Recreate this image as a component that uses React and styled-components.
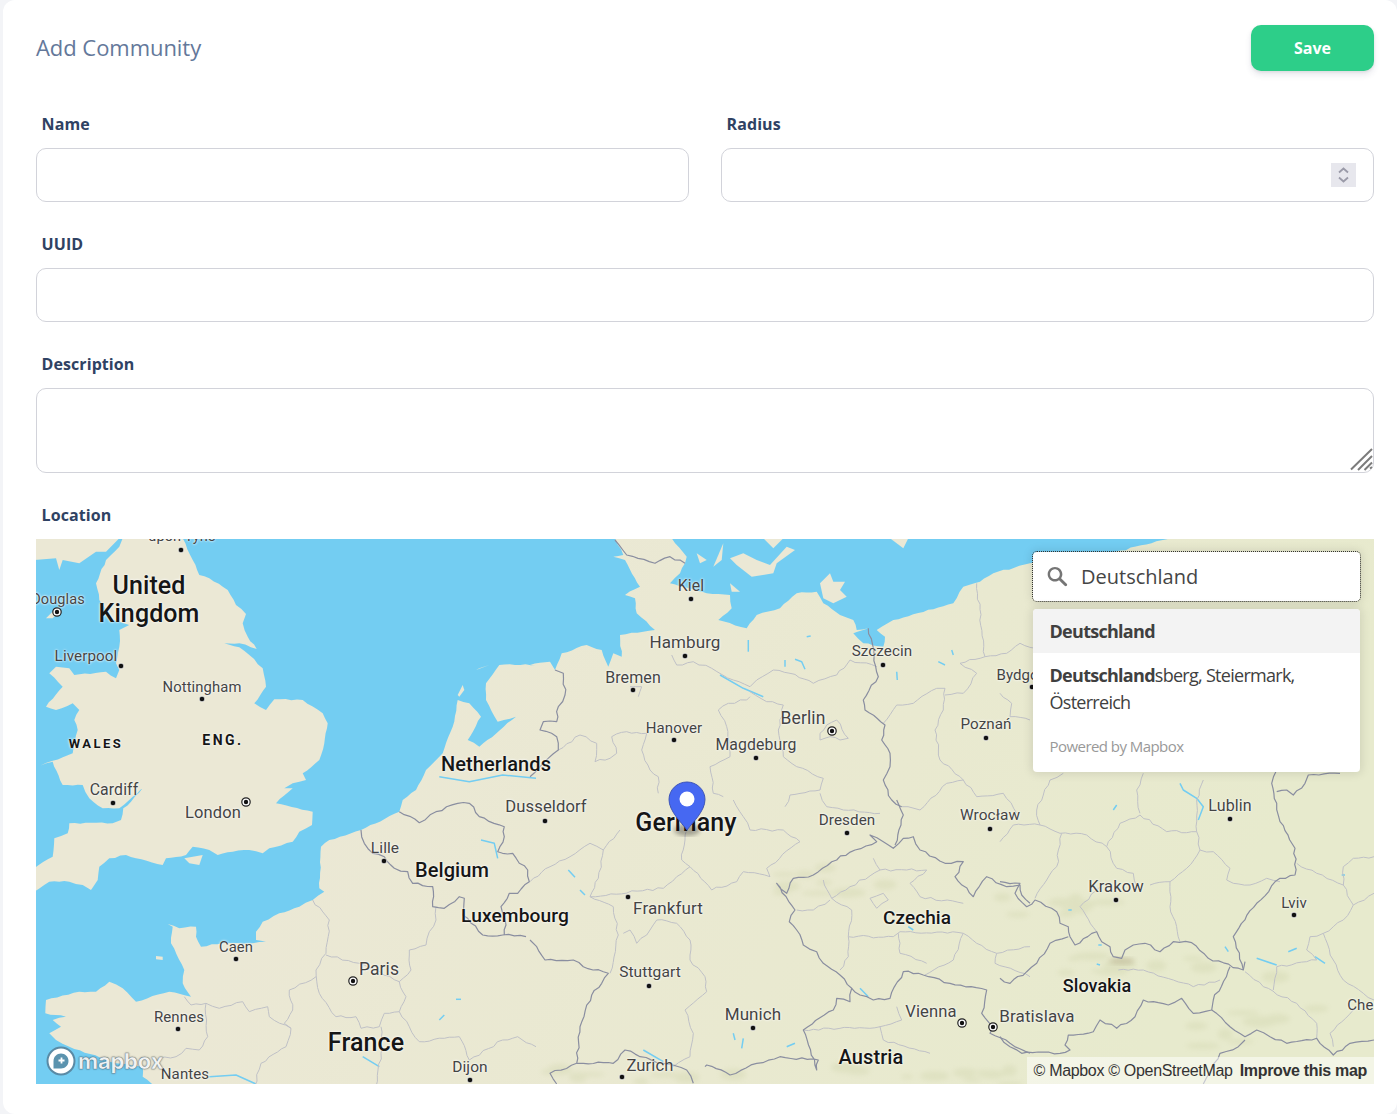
import React from 'react';
import styled, { createGlobalStyle } from 'styled-components';

const GlobalStyle = createGlobalStyle`
  html, body {
    margin: 0;
    padding: 0;
    background: #f3f4f7;
    font-family: 'Open Sans', 'Noto Sans', sans-serif;
  }
  * { box-sizing: border-box; }
`;

// the crops of the reference were 3x, so the shapes are traced in crop coordinates
const MAP_X = 36;
const MAP_Y = 539;
const NORTH_WEST = [36, 540];
const SOUTH_WEST = [36, 800];
const NORTH_MID = [530, 540];
const SOUTH_MID = [530, 800];
const EAST = [1000, 770];

const z = ([ox, oy], points) =>
  points.trim().split(/\s+/).map((p) => {
    const [x, y] = p.split(',').map(Number);
    return `${(x / 3 + ox).toFixed(1)},${(y / 3 + oy).toFixed(1)}`;
  }).join(' ');

// small repeatable noise, so that borders and coasts get their jags back
let seed = 7;
const noise = () => {
  seed = (seed * 9301 + 49297) % 233280;
  return seed / 233280 - 0.5;
};

const wiggle = (points, amount, step = 7) => {
  const list = points.trim().split(/\s+/).map((p) => p.split(',').map(Number));
  const out = [];
  list.forEach(([x, y], i) => {
    out.push(`${x},${y}`);
    const next = list[i + 1];
    if (!next) return;
    const dx = next[0] - x;
    const dy = next[1] - y;
    const length = Math.hypot(dx, dy);
    const parts = Math.floor(length / step);
    for (let k = 1; k < parts; k += 1) {
      const t = k / parts;
      const off = noise() * amount;
      const px = x + dx * t - (dy / length) * off;
      const py = y + dy * t + (dx / length) * off;
      out.push(`${px.toFixed(1)},${py.toFixed(1)}`);
    }
  });
  return out.join(' ');
};

const britain = wiggle([
  z(NORTH_WEST, '260,-5 440,-5 470,60 490,105 520,115 575,150 600,195 630,222 620,250 635,290 662,327 610,310 565,310 610,322 640,345 680,385 690,440 655,490 690,510 715,478 800,480 860,520 875,550 865,610 850,660 800,700 810,720 770,730 745,745 770,745 720,790'),
  z(SOUTH_WEST, '830,35 828,75 790,95 770,125 700,145 680,160 640,150 590,155 545,165 520,150 470,140 450,165 390,175 380,195 300,175 270,165 220,175 190,200 185,240 165,270 140,255 100,245 40,245 -5,275 -5,205 50,170 55,115 95,100 100,70 230,70 255,60 262,25 285,5'),
  z(NORTH_WEST, '335,730 290,770 250,805 200,805 160,775 140,735 80,735 50,665 -5,682 50,662 110,640 125,570 115,540 130,510 110,490 60,510 30,500 80,440 40,400 60,380 100,385 115,405 210,395 240,415 250,390 240,370 250,320 250,270 280,255 230,240 190,180 180,130 210,60 250,20'),
].join(' '), 1.4, 5);

const continent = wiggle([
  z(SOUTH_WEST, '360,860 320,830 320,800 240,790 100,740 60,720 40,700 75,680 50,660 90,650 28,640 30,600 130,575 180,575 220,545 260,565 300,605 400,575 465,590 440,550 445,510 405,430 410,380 395,372 430,385 480,380 480,410 495,440 560,430 650,430 690,425 660,420 660,395 680,365 730,340 790,320 830,300 865,275 850,265 855,140 880,120 975,90 1090,35'),
  z(NORTH_WEST, '1100,780 1140,750 1170,690 1220,640 1250,560 1265,480 1300,490 1335,530 1295,600 1330,620 1440,530 1385,545 1350,480 1350,430 1390,375 1500,375'),
  z(NORTH_MID, '0,375 60,365 75,390 95,340 170,315 215,330 235,380 250,340 275,350 270,285 340,275 375,270 320,220 315,175 285,165 330,140 285,60 250,50 280,45 255,-5 425,-5 470,50 465,70 450,100 420,130 530,160 600,165 605,205 565,240 650,265 680,225 750,205 800,160 860,155 880,190 930,225 970,240 980,270 1015,265 970,280 1000,310 1060,320 1065,290 1040,270 1090,240 1270,190 1300,140 1350,125 1390,100 1500,70 1530,62'),
  '1100,556 1172,538 1375,538 1375,1085 156,1085',
].join(' '), 1.4, 5);

const islands = [
  z(NORTH_WEST, '-5,-5 250,-5 210,35 180,35 130,70 80,60 70,90 60,55 -5,60'),
  z(NORTH_WEST, '30,235 60,205 75,210 50,235'),
  z(NORTH_WEST, '1265,465 1280,435 1285,450 1270,470'),
  z(NORTH_WEST, '1320,390 1360,375 1330,385'),
  z(SOUTH_WEST, '445,175 500,165 490,195 460,190'),
  z(SOUTH_WEST, '360,468 380,470 380,480 360,478'),
  z(NORTH_MID, '600,55 640,40 680,60 720,75 770,20 795,30 740,70 730,100 665,110 620,75'),
  z(NORTH_MID, '700,-5 730,25 760,-5'),
  z(NORTH_MID, '1080,-5 1120,25 1135,-5'),
  z(NORTH_MID, '500,40 530,60 510,70'),
  z(NORTH_MID, '550,80 580,10 575,60'),
  z(NORTH_MID, '600,130 630,155 605,155'),
  z(NORTH_MID, '870,130 900,100 910,125 945,125 930,150 950,170 910,190 880,175'),
];

const countryBorders = [
  z(NORTH_MID, '75,390 100,400 105,465 85,500 80,545 40,545 30,570 80,590 85,630 30,680 0,710'),
  z(SOUTH_WEST, '975,90 985,130 1010,160 1045,170 1075,205 1115,215 1130,250 1190,260 1190,320 1225,325 1270,290 1285,295 1280,345 1340,405 1400,405 1470,410'),
  z(SOUTH_WEST, '1090,35 1150,68 1200,35 1265,10 1300,10 1330,50 1405,80 1405,110 1385,155 1430,160 1450,190 1475,210 1480,245 1445,280 1420,280 1395,320 1410,375 1405,405'),
  z(SOUTH_MID, '0,420 20,440 45,480 130,480 160,500 235,520 215,550 185,585 150,680 140,790 60,820 80,852'),
  z(SOUTH_MID, '140,790 160,790 250,790 285,750 330,770 400,790 470,810 490,850'),
  z(SOUTH_MID, '525,800 530,795 600,825 680,790 750,770 865,780 860,810 820,690 910,630 920,595 960,605 965,565 930,525 880,490 860,455 820,435 800,390 778,365 795,330 740,250 770,280 790,235 850,225 905,185 975,150 1040,125 1020,105 1060,125 1090,145 1120,115 1150,110 1170,150 1245,190 1300,185 1275,230 1330,290 1370,230 1430,260 1470,255 1475,285 1500,310'),
  z(EAST, '0,335 60,340 45,370 80,410 105,390 170,425 180,460 205,470 210,500 225,525 290,485 305,515 330,530 340,560 365,565 375,540 400,525 435,520 480,545 520,515 575,518 625,565 730,600 735,575'),
  z(EAST, '690,590 640,690 635,720 580,730 545,685 505,705 430,690 405,740 350,775 300,750 280,785 205,795 195,825 210,840 180,850 65,850 30,830 0,800'),
  z(EAST, '205,500 150,520 110,580 80,605 30,640 0,625'),
  z(SOUTH_MID, '965,565 990,585 1030,600 1080,595 1120,515 1180,525 1260,550 1370,570 1355,640 1390,680 1380,700 1440,730 1500,760'),
  z(EAST, '730,600 700,500 770,400 840,325 885,315 885,235 840,155 830,100 815,40 830,0'),
  z(EAST, '830,65 860,60 880,75 915,40 925,15 1020,10'),
  z(EAST, '635,720 690,770 735,800 770,780 810,800 860,820 950,805 1000,855 1050,820 1122,810'),
  z(EAST, '735,810 715,830 660,850 610,942'),
  z(NORTH_MID, '1015,265 1045,410 1000,480 1005,510 1065,555 1055,600 1080,640 1080,680 1060,720 1085,780 1115,800'),
  z(SOUTH_MID, '1100,0 1120,45 1095,135'),
  z(NORTH_MID, '255,0 290,45 375,70 420,50 465,70'),
].map((points) => wiggle(points, 2.6, 5));

const stateBorders = [
  z(NORTH_MID, '425,345 440,375 490,365 545,385 610,420 660,440 680,420 730,390 780,400 850,430 920,405 960,360 1040,380'),
  z(NORTH_MID, '660,455 710,485 760,495 745,570 760,650 800,680 880,715 870,750 780,765 765,800'),
  z(NORTH_MID, '660,470 650,480 595,490 565,510 590,560 600,650 540,680 550,760 580,770'),
  z(NORTH_MID, '85,630 150,585 200,610 195,665 240,655 260,640 245,590 290,575 350,580 335,630 360,690 385,710 385,760'),
  z(NORTH_MID, '870,760 890,800 940,810 1050,820'),
  z(NORTH_MID, '870,580 890,555 920,540 955,595 930,600 900,590 870,600 870,580'),
  z(NORTH_MID, '300,440 335,440 325,470'),
  z(NORTH_MID, '1060,550 1100,495 1150,490 1220,445 1245,445 1240,510 1215,570 1230,660 1300,720 1250,730 1170,810 1115,800'),
  z(NORTH_MID, '1245,465 1300,460 1340,400 1290,370 1365,350 1340,130'),
  z(NORTH_MID, '1365,350 1430,340 1470,310 1530,330'),
  z(NORTH_MID, '1410,460 1445,490 1440,530 1500,540'),
  z(NORTH_MID, '1300,720 1340,770 1420,760 1460,820'),
  z(SOUTH_WEST, '830,300 880,360 870,460 840,510 850,580 900,650 960,650 975,685 1030,680 1045,640 1090,635 1120,680 1150,725 1270,710 1300,780 1400,720 1445,710 1500,740'),
  z(SOUTH_WEST, '870,465 970,490 1090,545 1110,590 1090,635'),
  z(SOUTH_WEST, '1090,545 1125,510 1120,450 1170,435 1180,395 1200,360 1200,320'),
  z(SOUTH_WEST, '840,530 760,570 770,630 745,670 765,685 750,740 675,790 655,860'),
  z(SOUTH_WEST, '445,590 465,615 510,610 550,625 620,605 640,635 695,620 700,650 765,685'),
  z(SOUTH_WEST, '510,610 515,710 490,750 450,745 420,770 370,775'),
  z(SOUTH_WEST, '1035,680 1035,760 1020,860'),
  z(SOUTH_MID, '0,245 60,200 120,170 180,130 220,150 205,235 180,290 250,320 265,405 240,520'),
  z(SOUTH_MID, '270,90 220,150'),
  z(SOUTH_MID, '280,400 300,390 320,430 350,405 380,360 440,370 480,420 480,480 525,530 530,575 465,630 490,700 480,770 430,800'),
  z(SOUTH_MID, '180,290 400,265 440,230 480,200 545,270 620,245 640,215 720,230 710,205 810,125 760,90 660,90 640,50 610,0'),
  z(SOUTH_MID, '480,200 455,180 470,90'),
  z(SOUTH_MID, '1030,175 1050,210 1130,210 1190,210 1140,250 1170,290 1300,310'),
  z(SOUTH_MID, '1050,210 960,260 905,295 880,240'),
  z(SOUTH_MID, '905,295 965,330 955,410 955,470 930,510'),
  z(SOUTH_MID, '955,410 1090,410 1110,395 1300,400 1270,480 1185,525'),
  z(SOUTH_MID, '1105,400 1110,460 1190,490'),
  z(SOUTH_MID, '800,330 850,330 900,300'),
  z(SOUTH_MID, '820,690 1050,680 1115,660 1100,620'),
  z(SOUTH_MID, '1050,680 1060,720 1200,760'),
  z(SOUTH_MID, '1020,295 1060,280 1075,300 1040,325 1020,295'),
  z(SOUTH_MID, '1300,400 1340,430 1400,460 1500,440'),
  z(SOUTH_MID, '1400,460 1395,490 1500,530'),
  z(EAST, '185,190 170,290 140,330 105,385'),
  z(EAST, '0,215 40,165 120,165 180,190 260,195 320,230 350,295 400,310 410,350'),
  z(EAST, '320,230 360,160 420,135 500,185 590,185 600,240 560,295 510,335 450,345'),
  z(EAST, '510,335 510,410 540,515'),
  z(EAST, '600,240 640,245 690,295 680,330 700,340 750,345 800,325 840,335'),
  z(EAST, '420,130 410,60 430,10'),
  z(EAST, '120,165 110,120 150,30 190,10'),
  z(EAST, '590,185 590,90 610,30'),
  z(EAST, '240,410 300,350'),
  z(EAST, '240,410 290,485'),
  z(EAST, '890,280 950,310 1030,345 1060,405 1030,450 970,490 1000,570 1030,630 1090,670 1122,690'),
  z(EAST, '1060,405 1122,370'),
  z(EAST, '1030,345 1030,290 1060,265 1122,260'),
  z(EAST, '830,590 950,570 920,540 930,500 970,490'),
  z(EAST, '830,590 820,660'),
  z(EAST, '735,605 790,650 890,700 950,760 950,805'),
  z(EAST, '355,600 430,600 520,630 580,650 660,630'),
  z(EAST, '1000,830 990,790 1060,720'),
].map((points) => wiggle(points, 2.4, 5));

const waterLines = [
  z(NORTH_WEST, '1210,710 1300,725 1400,705 1500,715'),
  z(NORTH_MID, '655,300 655,335'),
  z(NORTH_MID, '830,290 842,288'),
  z(NORTH_MID, '765,360 765,380'),
  z(NORTH_MID, '795,358 815,365 825,388'),
  z(NORTH_MID, '1100,395 1102,420'),
  z(NORTH_MID, '1265,330 1270,345'),
  z(NORTH_MID, '1225,365 1245,375'),
  z(NORTH_MID, '570,405 640,445 700,470'),
  z(SOUTH_MID, '115,210 135,232'),
  z(SOUTH_MID, '150,270 165,285'),
  z(SOUTH_MID, '610,700 615,720'),
  z(SOUTH_MID, '640,715 635,745'),
  z(SOUTH_MID, '770,740 795,730'),
  z(SOUTH_MID, '990,565 1015,590'),
  z(SOUTH_MID, '340,750 400,785'),
  z(SOUTH_MID, '1135,380 1150,390'),
  z(SOUTH_WEST, '1335,120 1375,130 1385,175'),
  z(SOUTH_WEST, '1210,660 1225,645'),
  z(SOUTH_WEST, '1260,598 1275,598'),
  z(SOUTH_WEST, '980,770 1030,800'),
  z(SOUTH_WEST, '520,830 600,825 660,852'),
  z(EAST, '540,40 550,60 590,85 610,110 595,150'),
  z(EAST, '350,105 340,120'),
  z(EAST, '205,420 215,420'),
  z(EAST, '295,525 305,525'),
  z(EAST, '290,582 300,585'),
  z(EAST, '675,530 685,545'),
  z(EAST, '865,545 890,535'),
  z(EAST, '945,560 975,580'),
  z(EAST, '770,565 830,585'),
  z(EAST, '1025,315 1035,315'),
];

// faint relief: centre x, centre y, half width, half height of the band it falls in
const reliefBands = [
  [700, 1075, 170, 8], [930, 1075, 90, 10], [830, 880, 60, 14], [1130, 965, 90, 14],
  [1260, 1010, 90, 40], [1060, 900, 60, 20],
];
const relief = reliefBands.flatMap(([cx, cy, w, h]) =>
  Array.from({ length: 9 }, () => ({
    x: cx + noise() * 2 * w,
    y: cy + noise() * 2 * h,
    rx: 6 + (noise() + 0.5) * 12,
    ry: 2 + (noise() + 0.5) * 4,
  })));

const cities = [
  [181, 550], [121, 666], [202, 699], [113, 803], [691, 599], [685, 656], [633, 690],
  [674, 740], [756, 758], [883, 665], [986, 738], [1032, 687], [545, 821], [384, 861],
  [236, 959], [178, 1029], [470, 1080], [847, 833], [990, 829], [1230, 819], [1116, 900],
  [1294, 915], [628, 897], [649, 986], [753, 1028], [622, 1077],
];

const capitals = [[57, 612], [246, 802], [832, 731], [353, 981], [962, 1023], [993, 1027]];

// text, centre x, centre y, font size
const placeLabels = [
  ['upon Tyne', 182, 537, 14.5],
  ['Douglas', 58, 600, 14.5],
  ['Liverpool', 86, 657, 15.2],
  ['Nottingham', 202, 687, 14.8],
  ['Cardiff', 114, 790, 15.8],
  ['London', 213, 813, 16.5],
  ['Dusseldorf', 546, 807, 16.6],
  ['Lille', 385, 849, 15.5],
  ['Caen', 236, 947, 14.8],
  ['Paris', 379, 970, 17.5],
  ['Rennes', 179, 1017, 15],
  ['Nantes', 185, 1074, 15],
  ['Dijon', 470, 1068, 15.5],
  ['Kiel', 691, 586, 15.8],
  ['Hamburg', 685, 642, 17],
  ['Bremen', 633, 678, 16],
  ['Hanover', 674, 728, 15],
  ['Magdeburg', 756, 745, 15.8],
  ['Berlin', 803, 719, 17.5],
  ['Szczecin', 882, 652, 15.2],
  ['Bydgoszcz', 1033, 675, 15],
  ['Poznań', 986, 725, 15.2],
  ['Dresden', 847, 821, 15.2],
  ['Wrocław', 990, 816, 15.4],
  ['Lublin', 1230, 806, 16],
  ['Krakow', 1116, 887, 16.6],
  ['Lviv', 1294, 903, 15],
  ['Vienna', 931, 1012, 16.6],
  ['Bratislava', 1037, 1016, 17],
  ['Chernivtsi', 1381, 1005, 15],
  ['Frankfurt', 668, 908, 17],
  ['Stuttgart', 650, 973, 15.5],
  ['Munich', 753, 1014, 17],
  ['Zurich', 650, 1066, 16.6],
];

const countryLabels = [
  ['United', 149, 585, 25],
  ['Kingdom', 149, 613, 25],
  ['Netherlands', 496, 764, 20],
  ['Belgium', 452, 870, 20],
  ['Luxembourg', 515, 916, 19.2],
  ['France', 366, 1042, 25],
  ['Germany', 686, 822, 25],
  ['Czechia', 917, 917, 19],
  ['Slovakia', 1097, 986, 18],
  ['Austria', 871, 1057, 20],
];

const regionLabels = [
  ['WALES', 96, 743, 13],
  ['ENG.', 223, 740, 14],
];

const Page = styled.div`
  margin-left: 3px;
  padding: 25px 23px 30px 33px;
  background: #fff;
  border-radius: 12px;
`;

const Header = styled.div`
  display: flex;
  align-items: center;
  justify-content: space-between;
  margin-bottom: 41px;
`;

const Title = styled.h1`
  margin: -2px 0 0;
  font-size: 22px;
  font-weight: 400;
  letter-spacing: -0.05px;
  color: #64789a;
`;

const SaveButton = styled.button`
  width: 123px;
  height: 46px;
  padding: 0;
  border: 0;
  border-radius: 10px;
  background: #2dce89;
  box-shadow: 0 4px 6px rgba(50, 50, 93, 0.11), 0 1px 3px rgba(0, 0, 0, 0.08);
  font-family: inherit;
  font-size: 16px;
  font-weight: 700;
  color: #fff;
`;

const Row = styled.div`
  display: grid;
  grid-template-columns: 1fr 1fr;
  gap: 32px;
`;

const Field = styled.div`
  margin-bottom: ${(p) => (p.$last ? 0 : 30)}px;
`;

const Label = styled.label`
  display: block;
  margin: 0 0 12px 5.6px;
  font-size: 16px;
  line-height: 24px;
  font-weight: 700;
  letter-spacing: 0.07px;
  color: #2f4263;
`;

const InputWrap = styled.div`
  position: relative;
`;

const TextInput = styled.input`
  display: block;
  width: 100%;
  height: 54px;
  padding: 0 16px;
  border: 1px solid #d2d3da;
  border-radius: 10px;
  background: #fff;
  font-family: inherit;
  font-size: 15px;
`;

const TextArea = styled.textarea`
  display: block;
  width: 100%;
  height: 85px;
  padding: 12px 16px;
  border: 1px solid #d2d3da;
  border-radius: 10px;
  background: #fff;
  font-family: inherit;
  font-size: 15px;
  resize: none;
`;

const Spinner = styled.svg`
  position: absolute;
  top: 15px;
  right: 18px;
  width: 25px;
  height: 24px;
  background: #e7e7ed;
`;

const ResizeGrip = styled.svg`
  position: absolute;
  right: 1px;
  bottom: 2px;
  width: 24px;
  height: 24px;
`;

const MapBox = styled.div`
  position: relative;
  height: 545px;
  overflow: hidden;
  background: #73cdf2;
`;

const MapArt = styled.svg`
  position: absolute;
  top: 0;
  left: 0;
  width: 100%;
  height: 100%;
`;

const Place = styled.span`
  position: absolute;
  left: ${(p) => p.$x - MAP_X}px;
  top: ${(p) => p.$y - MAP_Y}px;
  transform: translate(-50%, -50%);
  font-family: Roboto, 'Liberation Sans', sans-serif;
  font-size: ${(p) => p.$size}px;
  line-height: 1;
  white-space: nowrap;
  font-weight: ${(p) => (p.$kind === 'city' ? 400 : p.$kind === 'country' ? 500 : 700)};
  color: ${(p) => (p.$kind === 'city' ? '#444' : '#161616')};
  letter-spacing: ${(p) => (p.$kind === 'region' ? 2.5 : 0.1)}px;
  text-shadow: 0 0 2px rgba(255, 255, 255, 0.95), 0 0 3px rgba(255, 255, 255, 0.8);
`;

const Pin = styled.svg`
  position: absolute;
  left: ${668 - MAP_X}px;
  top: ${781 - MAP_Y}px;
  width: 38px;
  height: 56px;
`;

const Geocoder = styled.div`
  position: absolute;
  top: 13px;
  right: 14px;
  width: 327px;
`;

const SearchBox = styled.div`
  display: flex;
  align-items: center;
  gap: 12px;
  height: 49px;
  padding: 0 13px;
  background: #fff;
  border-radius: 4px;
  outline: 1px dotted #333;
  box-shadow: 0 0 10px 2px rgba(0, 0, 0, 0.1);
  font-size: 20px;
  color: #454545;
`;

const Suggestions = styled.div`
  margin-top: 8px;
  height: 163px;
  background: #fff;
  border-radius: 4px;
  overflow: hidden;
  box-shadow: 0 0 10px 2px rgba(0, 0, 0, 0.1);
  font-size: 18px;
  line-height: 27px;
  letter-spacing: -0.72px;
  color: #404040;
`;

const Suggestion = styled.div`
  padding: ${(p) => (p.$active ? '9px 16.5px 8px' : '9px 17px 0 16.5px')};
  background: ${(p) => (p.$active ? '#f3f3f3' : '#fff')};
`;

const Powered = styled.div`
  padding: 20px 16.5px 0;
  font-size: 15px;
  line-height: 20px;
  letter-spacing: -0.55px;
  color: #999;
`;

const Logo = styled.div`
  position: absolute;
  left: 10px;
  bottom: 8px;
  display: flex;
  align-items: center;
  gap: 2px;
`;

const LogoWord = styled.span`
  font-family: Inter, Roboto, sans-serif;
  font-size: 22px;
  font-weight: 700;
  line-height: 1;
  letter-spacing: -0.2px;
  color: rgba(255, 255, 255, 0.92);
  -webkit-text-stroke: 0.4px rgba(60, 90, 110, 0.6);
  text-shadow: 0 0 2px rgba(0, 0, 0, 0.55);
`;

const Attribution = styled.div`
  position: absolute;
  right: 0;
  bottom: 0;
  display: flex;
  gap: 7px;
  height: 27px;
  padding: 1px 7px 0;
  align-items: center;
  background: rgba(255, 255, 255, 0.5);
  font-family: 'Liberation Sans', Arial, sans-serif;
  font-size: 16px;
  letter-spacing: -0.32px;
  color: #333;
`;

const AttributionLink = styled.span`
  font-weight: 700;
`;

const MapDrawing = () => (
  <MapArt viewBox={`${MAP_X} ${MAP_Y} 1338 545`} preserveAspectRatio="none">
    <defs>
      <linearGradient id="land" x1="0" x2="1" y1="0" y2="0.25">
        <stop offset="0.3" stopColor="#ebe8d5" />
        <stop offset="0.7" stopColor="#e9e9d0" />
        <stop offset="1" stopColor="#e7eacd" />
      </linearGradient>
      <filter id="soft">
        <feGaussianBlur stdDeviation="2.5" />
      </filter>
      <filter id="softer">
        <feGaussianBlur stdDeviation="0.35" />
      </filter>
    </defs>
    <g filter="url(#softer)">
      <polygon points={continent} fill="url(#land)" />
      <polygon points={britain} fill="#ebe8d5" />
      {islands.map((points, i) => <polygon key={i} points={points} fill="#ebe8d5" />)}
    </g>
    <g fill="#d3d7b0" opacity="0.42" filter="url(#soft)">
      {relief.map((r, i) => <ellipse key={i} cx={r.x} cy={r.y} rx={r.rx} ry={r.ry} />)}
    </g>
    <ellipse cx="1122" cy="961" rx="13" ry="3.5" fill="#bdb795" opacity="0.6" filter="url(#soft)" />
    <g fill="none" strokeLinejoin="round" filter="url(#softer)">
      {waterLines.map((points, i) => <polyline key={i} points={points} stroke="#73cdf2" strokeWidth="1.5" />)}
      {stateBorders.map((points, i) => <polyline key={i} points={points} stroke="#bfc0c6" strokeWidth="1" />)}
      {countryBorders.map((points, i) => <polyline key={i} points={points} stroke="#8a8ea0" strokeWidth="1.2" />)}
    </g>
    {cities.map(([x, y]) => (
      <circle key={`${x}-${y}`} cx={x} cy={y} r="2.8" fill="#111" stroke="#fff" strokeOpacity="0.7" strokeWidth="1" />
    ))}
    {capitals.map(([x, y]) => (
      <g key={`${x}-${y}`}>
        <circle cx={x} cy={y} r="4.2" fill="#fff" stroke="#222" strokeWidth="1.2" />
        <circle cx={x} cy={y} r="2.2" fill="#111" />
      </g>
    ))}
  </MapArt>
);

const SearchIcon = () => (
  <svg width="23" height="23" viewBox="0 0 18 18" fill="#757575" style={{ flex: 'none' }}>
    <path d="M7 1.5C3.9 1.5 1.3 4 1.3 7.2s2.6 5.7 5.7 5.7c1.2 0 2.3-.4 3.2-1l4.4 4.3c.5.5 1.2.5 1.6 0 .5-.4.5-1.1 0-1.6l-4.4-4.3c.6-.9 1-2 1-3.1C12.8 4 10.2 1.5 7 1.5zm0 1.9c2.1 0 3.8 1.7 3.8 3.8S9.1 11 7 11s-3.8-1.7-3.8-3.8S4.9 3.4 7 3.4z" />
  </svg>
);

const LogoMark = () => (
  <svg width="30" height="30" viewBox="0 0 30 30">
    <circle cx="15" cy="15" r="13.5" fill="#fff" stroke="#5a8aa5" strokeWidth="2" />
    <path d="M15 7.5c4.2 0 7.5 3.3 7.5 7.5s-3.3 7.5-7.5 7.5H7.5V15c0-4.2 3.3-7.5 7.5-7.5z" fill="#5b93ae" />
    <path d="M15.5 11.5v6M12.5 14.5h6" stroke="#fff" strokeWidth="1.8" />
  </svg>
);

export default function App() {
  return (
    <>
      <GlobalStyle />
      <Page>
        <Header>
          <Title>Add Community</Title>
          <SaveButton>Save</SaveButton>
        </Header>
        <Row>
          <Field>
            <Label>Name</Label>
            <TextInput type="text" />
          </Field>
          <Field>
            <Label>Radius</Label>
            <InputWrap>
              <TextInput type="text" />
              <Spinner viewBox="0 0 25 24" fill="none" stroke="#9a9aa8" strokeWidth="1.8">
                <path d="M8 9.5l4.5-4 4.5 4M8 14.5l4.5 4 4.5-4" />
              </Spinner>
            </InputWrap>
          </Field>
        </Row>
        <Field>
          <Label>UUID</Label>
          <TextInput type="text" />
        </Field>
        <Field>
          <Label>Description</Label>
          <InputWrap>
            <TextArea />
            <ResizeGrip viewBox="0 0 24 24" stroke="#7c7c7c" strokeWidth="2">
              <path d="M2 22.5L23 2M9 23L23 9M15.5 23L23 15.5M21 21.5L23 20" />
            </ResizeGrip>
          </InputWrap>
        </Field>
        <Field $last>
          <Label>Location</Label>
          <MapBox>
            <MapDrawing />
            {placeLabels.map(([text, x, y, size]) => (
              <Place key={text} $kind="city" $x={x} $y={y} $size={size}>{text}</Place>
            ))}
            {regionLabels.map(([text, x, y, size]) => (
              <Place key={text} $kind="region" $x={x} $y={y} $size={size}>{text}</Place>
            ))}
            {countryLabels.map(([text, x, y, size]) => (
              <Place key={text} $kind="country" $x={x} $y={y} $size={size}>{text}</Place>
            ))}
            <Pin viewBox="0 0 38 56">
              <ellipse cx="19" cy="49" rx="13" ry="6" fill="#000" opacity="0.3" filter="blur(2px)" />
              <path d="M19 1C9 1 1 9 1 18.5 1 30 13 41 19 49c6-8 18-19 18-30.5C37 9 29 1 19 1z" fill="#4668f2" stroke="#3d55b8" strokeWidth="1" />
              <circle cx="19" cy="18" r="7.5" fill="#fff" />
            </Pin>
            <Geocoder>
              <SearchBox>
                <SearchIcon />
                Deutschland
              </SearchBox>
              <Suggestions>
                <Suggestion $active><b>Deutschland</b></Suggestion>
                <Suggestion><b>Deutschland</b>sberg, Steiermark, Österreich</Suggestion>
                <Powered>Powered by Mapbox</Powered>
              </Suggestions>
            </Geocoder>
            <Logo>
              <LogoMark />
              <LogoWord>mapbox</LogoWord>
            </Logo>
            <Attribution>
              <span>© Mapbox © OpenStreetMap</span>
              <AttributionLink>Improve this map</AttributionLink>
            </Attribution>
          </MapBox>
        </Field>
      </Page>
    </>
  );
}
